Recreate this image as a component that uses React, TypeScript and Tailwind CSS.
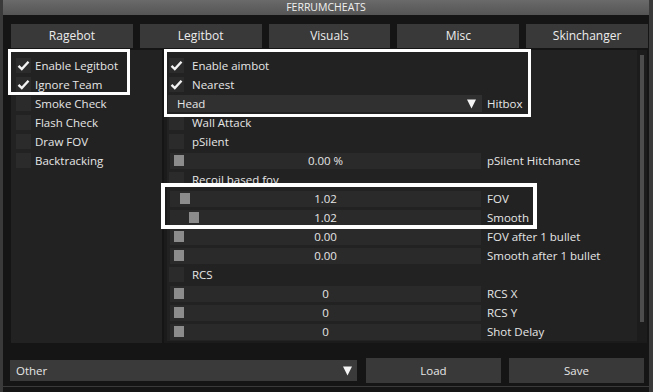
import { type ReactNode } from 'react'

const tabs = ['Ragebot', 'Legitbot', 'Visuals', 'Misc', 'Skinchanger']

const leftItems = [
  { label: 'Enable Legitbot', on: true },
  { label: 'Ignore Team', on: true },
  { label: 'Smoke Check', on: false },
  { label: 'Flash Check', on: false },
  { label: 'Draw FOV', on: false },
  { label: 'Backtracking', on: false },
]

type Row =
  | { kind: 'check'; label: string; on?: boolean }
  | { kind: 'combo'; value: string; label: string }
  | { kind: 'slider'; value: string; label: string; grab: number }

const rightRows: Row[] = [
  { kind: 'check', label: 'Enable aimbot', on: true },
  { kind: 'check', label: 'Nearest', on: true },
  { kind: 'combo', value: 'Head', label: 'Hitbox' },
  { kind: 'check', label: 'Wall Attack' },
  { kind: 'check', label: 'pSilent' },
  { kind: 'slider', value: '0.00 %', label: 'pSilent Hitchance', grab: 4 },
  { kind: 'check', label: 'Recoil based fov' },
  { kind: 'slider', value: '1.02', label: 'FOV', grab: 10 },
  { kind: 'slider', value: '1.02', label: 'Smooth', grab: 19 },
  { kind: 'slider', value: '0.00', label: 'FOV after 1 bullet', grab: 4 },
  { kind: 'slider', value: '0.00', label: 'Smooth after 1 bullet', grab: 4 },
  { kind: 'check', label: 'RCS' },
  { kind: 'slider', value: '0', label: 'RCS X', grab: 4 },
  { kind: 'slider', value: '0', label: 'RCS Y', grab: 4 },
  { kind: 'slider', value: '0', label: 'Shot Delay', grab: 4 },
]

function Checkbox({ on }: { on?: boolean }) {
  return (
    <div className="flex h-[15px] w-[15px] shrink-0 items-center justify-center bg-[#2b2b2b]">
      {on && (
        <svg width="13" height="11" viewBox="0 0 13 11">
          <path d="M1.5 5.8 L4.8 9 L11.5 1.8" fill="none" stroke="#f2f2f2" strokeWidth="2.4" />
        </svg>
      )}
    </div>
  )
}

function Triangle() {
  return (
    <svg width="9" height="10" viewBox="0 0 9 10">
      <path d="M0 0.5 H9 L4.5 9.5 Z" fill="#f4f4f4" />
    </svg>
  )
}

function RowShell({ children }: { children: ReactNode }) {
  return <div className="flex h-[19px] items-center">{children}</div>
}

function RightRow({ row }: { row: Row }) {
  if (row.kind === 'check') {
    return (
      <RowShell>
        <Checkbox on={row.on} />
        <span className="ml-[8px]">{row.label}</span>
      </RowShell>
    )
  }
  if (row.kind === 'combo') {
    return (
      <RowShell>
        <div className="-ml-[1px] flex h-[17px] w-[314px] items-center justify-between bg-[#303030] pl-[9px] pr-[6px]">
          <span>{row.value}</span>
          <Triangle />
        </div>
        <span className="ml-[5px]">{row.label}</span>
      </RowShell>
    )
  }
  return (
    <RowShell>
      <div className="relative ml-[1px] flex h-[16px] w-[311px] items-center justify-center bg-[#2a2a2a]">
        <div
          className="absolute top-[2px] h-[11px] w-[10px] bg-[#8c8c8c]"
          style={{ left: row.grab }}
        />
        <span>{row.value}</span>
      </div>
      <span className="ml-[6px]">{row.label}</span>
    </RowShell>
  )
}

export default function App() {
  return (
    <div className="relative h-[392px] w-[653px] overflow-hidden bg-[#3a3a3a] font-['Open_Sans',sans-serif] text-[11.5px] text-[#e6e6e6]">
      <div className="ml-[3px] flex h-[392px] w-[646px] flex-col">
        {/* Title bar */}
        <div className="flex h-[15px] items-center justify-center bg-gradient-to-b from-[#6a6a6a] to-[#555555] text-[10.5px] leading-none text-[#f0f0f0]">
          FERRUMCHEATS
        </div>
        <div className="flex flex-1 flex-col bg-[#151515] pt-[9px]">
          {/* Tabs */}
          <div className="flex gap-[7px] pl-[8px] pr-[1px]">
            {tabs.map((t) => (
              <div
                key={t}
                className="flex h-[24px] flex-1 items-center justify-center bg-[#393939] text-[12px] text-[#ececec]"
              >
                {t}
              </div>
            ))}
          </div>

          {/* Panels */}
          <div className="mt-[2px] flex h-[293px] pl-[8px]">
            <div className="w-[151px] bg-[#222222] pl-[5px] pt-[6px]">
              {leftItems.map((it) => (
                <RowShell key={it.label}>
                  <Checkbox on={it.on} />
                  <span className="ml-[4px]">{it.label}</span>
                </RowShell>
              ))}
            </div>
            <div className="ml-[2px] flex w-[483px] bg-[#1b1b1b] pb-[2px] pl-[3px]">
              <div className="flex flex-1 bg-[#222222]">
                <div className="flex-1 pl-[2px] pt-[6px]">
                  {rightRows.map((r, i) => (
                    <RightRow key={i} row={r} />
                  ))}
                </div>
                <div className="flex w-[10px] justify-center bg-[#1c1c1c] pt-[5px]">
                  <div className="h-[267px] w-[4px] bg-[#4d4d4d]" />
                </div>
              </div>
            </div>
          </div>

          {/* Bottom bar */}
          <div className="mt-[15px] flex items-center pl-[7px] pr-[1px]">
            <div className="flex h-[21px] w-[347px] items-center justify-between bg-[#3a3a3a] pl-[6px] pr-[5px]">
              <span>Other</span>
              <Triangle />
            </div>
            <div className="ml-[9px] flex h-[25px] w-[135px] items-center justify-center bg-[#393939]">
              Load
            </div>
            <div className="ml-[8px] flex h-[25px] w-[135px] items-center justify-center bg-[#393939]">
              Save
            </div>
          </div>
          <div className="mt-[3px] h-[1px] bg-[#3a3a3a]" />
        </div>
      </div>

      {/* Annotation boxes */}
      <div className="pointer-events-none absolute left-[8px] top-[49px] h-[46px] w-[122px] border-[3px] border-white" />
      <div className="pointer-events-none absolute left-[164px] top-[49px] h-[68px] w-[367px] border-[3px] border-white" />
      <div className="pointer-events-none absolute left-[161px] top-[183px] h-[46px] w-[376px] border-[4px] border-white" />
    </div>
  )
}
